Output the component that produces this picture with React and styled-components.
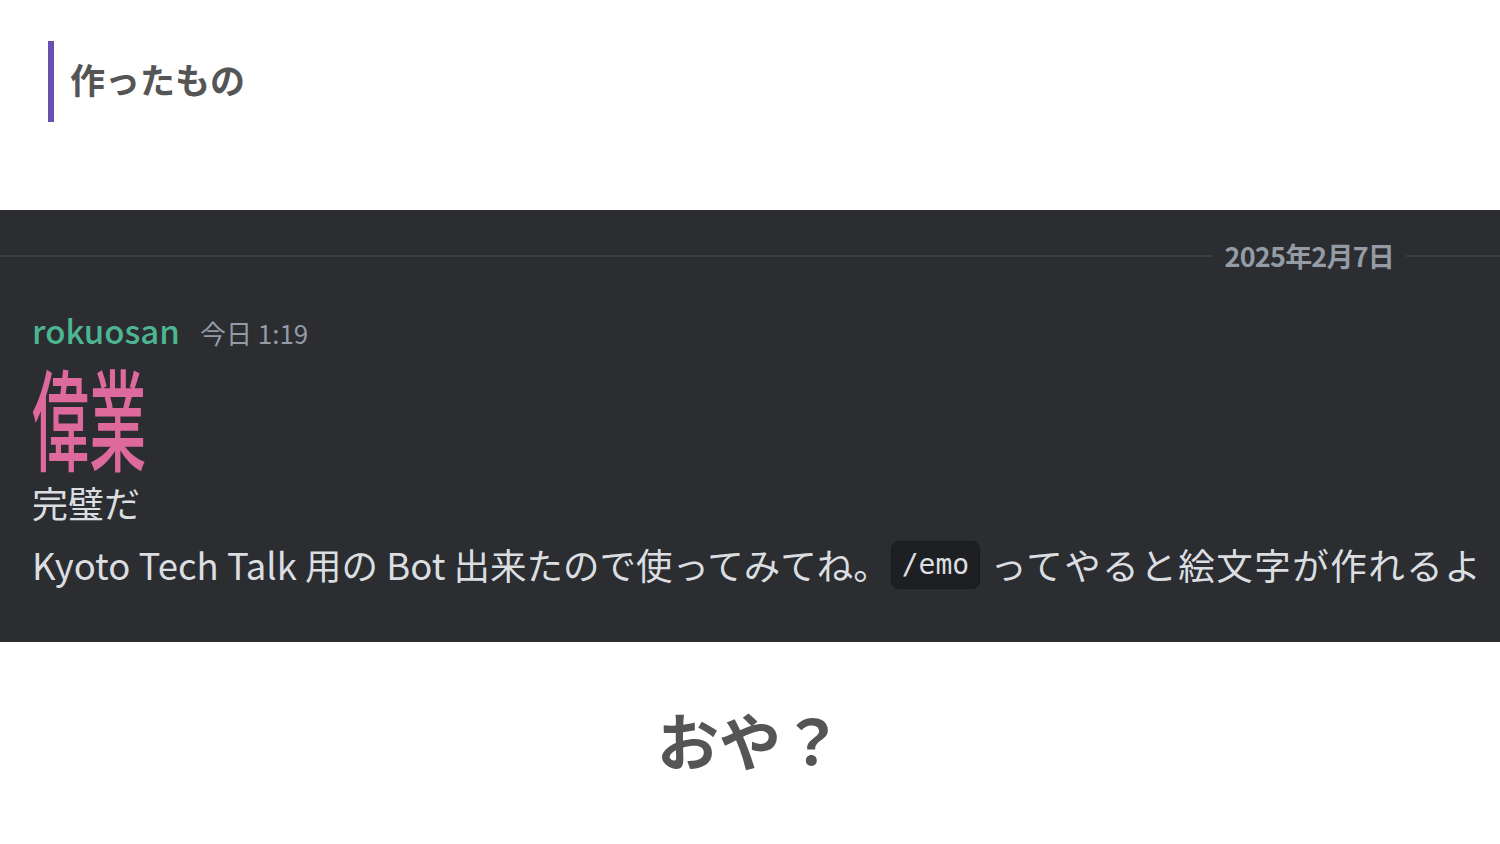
import React from "react"
import styled, { createGlobalStyle } from "styled-components"

const Global = createGlobalStyle`
    html, body {
        margin: 0;
        padding: 0;
        background: #ffffff;
    }
    body {
        font-family: "Noto Sans CJK JP", "Noto Sans", sans-serif;
    }
`

const Page = styled.div`
    width: 1500px;
    height: 844px;
    display: flex;
    flex-direction: column;
    overflow: hidden;
`

const Heading = styled.h2`
    margin: 41px 0 0 48px;
    height: 81px;
    border-left: 6px solid #6a4fb0;
    padding: 0 0 6px 16px;
    box-sizing: border-box;
    display: flex;
    align-items: center;
    font-size: 35px;
    font-weight: 700;
    color: #555555;
`

const Panel = styled.div`
    margin-top: 88px;
    height: 432px;
    background: #2b2d31;
    display: flex;
    flex-direction: column;
`

const Divider = styled.div`
    margin-top: 26px;
    height: 40px;
    display: flex;
    align-items: center;
    gap: 12px;

    &::before,
    &::after {
        content: "";
        height: 2px;
        background: #3a3c42;
    }
    &::before {
        flex: 1;
    }
    &::after {
        width: 94px;
    }
`

const DateLabel = styled.span`
    font-size: 27px;
    line-height: 40px;
    font-weight: 700;
    color: #949ba4;
    letter-spacing: -0.8px;
`

const Message = styled.div`
    padding: 29px 32px 0;
    display: flex;
    flex-direction: column;
`

const Header = styled.div`
    display: flex;
    align-items: baseline;
    gap: 20px;
    height: 50px;
    line-height: 50px;
`

const Author = styled.span`
    font-size: 33px;
    font-weight: 500;
    color: #4cb592;
`

const Stamp = styled.span`
    font-size: 26px;
    color: #949ba4;
`

const Emoji = styled.div`
    margin: 5px 0 7px;
    height: 110px;
    font-size: 110px;
    line-height: 110px;
    font-weight: 500;
    color: #de6a9d;
    transform: scaleX(0.52);
    transform-origin: left center;
    white-space: nowrap;
`

const Line = styled.div`
    height: ${p => p.lh}px;
    font-size: ${p => p.size}px;
    line-height: ${p => p.lh}px;
    color: #dbdee1;
    white-space: nowrap;
    display: flex;
    align-items: center;
`

const Spread = styled.span`
    letter-spacing: ${p => p.spacing}px;
`

const Code = styled.code`
    display: inline-flex;
    align-items: center;
    height: 46px;
    padding: 0 10px;
    margin: 0 10px 0 1px;
    background: #1e1f22;
    border: 1px solid #18191c;
    border-radius: 8px;
    font-family: "DejaVu Sans Mono", monospace;
    font-size: 28px;
    color: #dbdee1;
`

const Oya = styled.div`
    margin-top: 52px;
    text-align: center;
    font-size: 62px;
    font-weight: 700;
    color: #555555;
`

export default function App() {
    return (
        <Page>
            <Global />
            <Heading>作ったもの</Heading>
            <Panel>
                <Divider>
                    <DateLabel>2025年2月7日</DateLabel>
                </Divider>
                <Message>
                    <Header>
                        <Author>rokuosan</Author>
                        <Stamp>今日 1:19</Stamp>
                    </Header>
                    <Emoji>偉業</Emoji>
                    <Line size={36} lh={50}>完璧だ</Line>
                    <Line size={36.5} lh={76}>
                        Kyoto Tech Talk 用の Bot 出来たので使ってみてね。
                        <Code>/emo</Code>
                        <Spread spacing={1.5}>ってやると絵文字が作れるよ</Spread>
                    </Line>
                </Message>
            </Panel>
            <Oya>おや？</Oya>
        </Page>
    )
}
